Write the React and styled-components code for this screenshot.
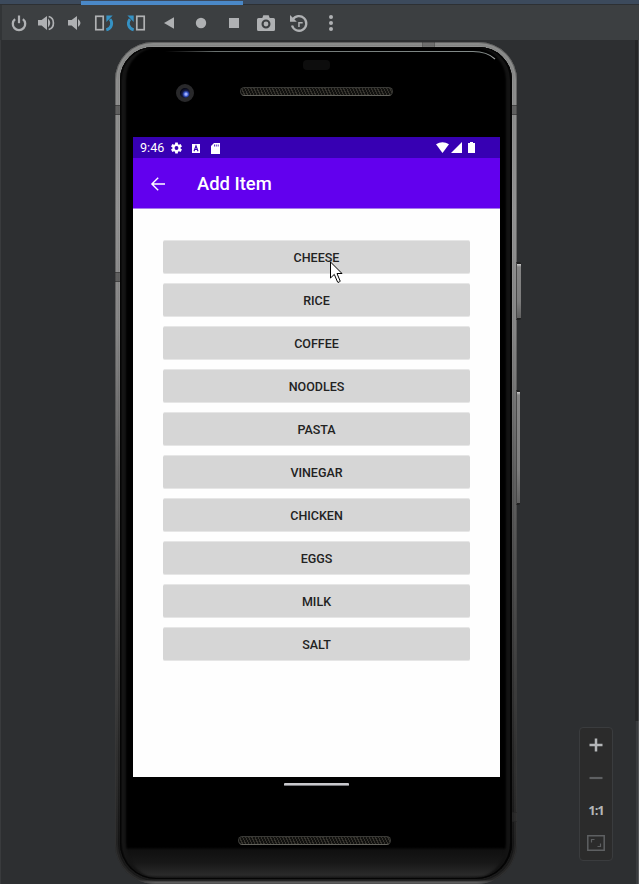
import React from "react";
import styled, { createGlobalStyle, css } from "styled-components";

const Global = createGlobalStyle`
  * { box-sizing: border-box; }
  body { margin: 0; background: #2d2f31; overflow: hidden; font-family: Roboto, sans-serif; }
  svg { display: block; }
`;

const Window = styled.div`
  position: relative;
  width: 639px;
  height: 884px;
  display: flex;
  flex-direction: column;
  background: #2d2f31;
  overflow: hidden;
`;

const TabStrip = styled.div`
  height: 5px;
  flex: none;
  padding-left: 81px;
  background: linear-gradient(#3c4a5c 4px, #2d3033 4px);
`;

const ActiveTab = styled.div`
  width: 162px;
  height: 5px;
  background: linear-gradient(#3c4a5c 1px, #4a88c7 1px);
`;

const Toolbar = styled.div`
  height: 35px;
  flex: none;
  display: flex;
  align-items: center;
  padding-left: 9px;
  background: #3c3f41;
  box-shadow: inset 2px 0 #323537;
`;

const ToolButton = styled.button`
  width: 20px;
  height: 20px;
  padding: 0;
  border: 0;
  background: none;
  margin-left: ${(p) => p.$gap}px;
  color: #afb1b3;
`;

const Stage = styled.main`
  flex: 1;
  padding: 2px 0 0 115px;
  box-shadow: inset 1px 0 #393b3d;
`;

const Phone = styled.section`
  position: relative;
  width: 402px;
  height: 842px;
  padding: 5px;
  border-radius: 38px 38px 40px 40px;
  background: linear-gradient(#8f908f 0, #989898 170px, #8a8a8a 290px, #606060 430px, #444 570px, #2a2a2a 700px, #171717 800px, #1c1c1c 838px, #666 841px);
  box-shadow: inset 0 0 0 1px rgba(60, 60, 60, 0.5), inset 0 0 0 3px rgba(255, 255, 255, 0.06), inset 0 0 0 4px rgba(0, 0, 0, 0.08);
`;

const Face = styled.div`
  height: 832px;
  display: flex;
  flex-direction: column;
  align-items: center;
  border-radius: 33px 33px 36px 36px;
  background: linear-gradient(#000 800px, #101010 803px, #181818 816px, #2a2a2a 828px, #111 832px);
  box-shadow: inset 0 0 0 1px #050505, inset 2px 0 #0d0d0d, inset 6px 0 2px #151515, inset -2px 0 #050505, inset -6px 0 2px #131313;
`;

const RimSeam = styled.i`
  position: absolute;
  background: rgba(50, 50, 50, 0.5);
  border: 0 solid rgba(30, 30, 30, 0.4);
  ${(p) =>
    p.$side === "top"
      ? css`top: 0; left: 307px; width: 13px; height: 5px; border-width: 0 1px; opacity: .6;`
      : css`top: ${p.$at}px; ${p.$side}: 0; width: 5px; height: 10px; border-width: 1px 0;`}
`;

const SideKey = styled.i`
  position: absolute;
  left: 401px;
  top: ${(p) => p.$at}px;
  width: ${(p) => p.$width}px;
  height: ${(p) => p.$length}px;
  border-radius: 0 2px 2px 0;
  border: solid #202020;
  border-width: 2px 0 2px 1px;
  border-left-color: #484848;
  background: linear-gradient(#ccc, #858585 3px, #7d7d7d 70%, #606060);
`;

const GlassEdge = styled.svg`
  position: absolute;
  left: 40px;
  top: 7px;
`;

const TopBezel = styled.div`
  width: 100%;
  height: 90px;
  flex: none;
  padding-top: 13px;
`;

const Sensor = styled.div`
  width: 27px;
  height: 10px;
  margin-left: 183px;
  border-radius: 4px;
  background: #0d0d0d;
`;

const CameraRow = styled.div`
  display: flex;
  align-items: center;
  height: 20px;
  margin-top: 11px;
  padding-left: 56px;
  gap: 46px;
`;

const Lens = styled.div`
  width: 18px;
  height: 18px;
  border-radius: 50%;
  margin-top: 3px;
  border: 4px solid #29292b;
  background: radial-gradient(circle at 60% 62%, #9dadff 0 1px, #3554c7 2.2px, #151b42 3.8px, #070814 6px);
`;

const Grille = styled.div`
  width: 153px;
  height: 9px;
  flex: none;
  margin-top: ${(p) => p.$top || 0}px;
  margin-left: ${(p) => p.$left || 0}px;
  border: 1px solid #3a3a37;
  border-bottom-color: #62625c;
  border-radius: 5px;
  background: repeating-linear-gradient(65deg, #36342e 0 1px, #11110f 1.2px 2.8px);
`;

const Screen = styled.div`
  width: 367px;
  height: 640px;
  flex: none;
  margin-left: 1px;
  background: #fefefe;
`;

const StatusBar = styled.div`
  height: 21px;
  display: flex;
  align-items: center;
  padding: 1px 25px 0 7px;
  background: #3700b3;
  color: #fff;
`;

const Clock = styled.span`
  width: 30px;
  font-size: 12.6px;
  line-height: 20px;
`;

const StatusIcon = styled.svg`
  margin-left: ${(p) => p.$gap || 0}px;
  flex: none;
`;

const StatusEnd = styled.div`
  display: flex;
  align-items: center;
  margin-left: auto;
  padding-bottom: 1px;
`;

const AppBar = styled.header`
  height: 51px;
  display: flex;
  align-items: center;
  padding: 1px 0 0 17px;
  gap: 31px;
  background: #6200ee;
  border-bottom: 1px solid #a67aec;
  color: #fff;
`;

const Title = styled.h1`
  margin: 0;
  font-size: 18.4px;
  font-weight: 500;
  line-height: 24px;
`;

const ItemList = styled.div`
  display: flex;
  flex-direction: column;
  gap: 9px;
  padding: 31px 30px 0;
`;

const ItemButton = styled.button`
  height: 34px;
  padding: 1px 0 0;
  border: 0 solid #e6e6e6;
  border-width: 1px 0;
  border-radius: 2px;
  background: #d6d6d6;
  color: #222;
  font: 500 12.5px/32px Roboto, sans-serif;
  text-transform: uppercase;
`;

const HomePill = styled.div`
  width: 65px;
  height: 3px;
  flex: none;
  margin-top: 6px;
  border: solid #77777b;
  border-width: 0 0 1px;
  border-radius: 1px;
  background: #c9c9cd;
`;

const Pointer = styled.svg`
  position: absolute;
  left: 329px;
  top: 260px;
`;

const ZoomPanel = styled.aside`
  position: absolute;
  left: 579px;
  top: 727px;
  width: 34px;
  height: 134px;
  display: flex;
  flex-direction: column;
  align-items: center;
  justify-content: space-between;
  padding: 7px 0 7px;
  border: 1px solid #3a3c3e;
  border-radius: 4px;
  background: #2b2b2b;
`;

const ZoomButton = styled.button`
  width: 20px;
  height: 20px;
  display: grid;
  place-items: center;
  padding: 0;
  border: 0;
  background: none;
  color: ${(p) => (p.$dim ? "#5e6062" : "#b4b6b8")};
  font: 700 13px/20px "Open Sans", Roboto, sans-serif;
  letter-spacing: -1px;
  white-space: nowrap;
`;

const ScrollEdge = styled.div`
  position: absolute;
  right: 0;
  top: 40px;
  width: 4px;
  height: 844px;
  background: linear-gradient(90deg, #252627 3px, #454749 3px);
  &::after {
    content: "";
    position: absolute;
    inset: 681px 0 0;
    background: linear-gradient(90deg, #2d2f31 1px, #393b3d 1px 3px, #545658 3px);
  }
`;

const SPEAKER = "M0 7h3.6L9 3v14l-5.4-4.5H0z";

const tools = [
  ["Power", 0, <><path d="M6.1 6.1a6.2 6.2 0 1 0 7.8 0" fill="none" stroke="currentColor" strokeWidth="2.3" /><path d="M10 2.5v7.7" stroke="currentColor" strokeWidth="2.2" /></>],
  ["Volume up", 8, <><path transform="translate(1)" d={SPEAKER} fill="currentColor" /><path d="M11 5.5q4.5 4.5 0 9z" fill="currentColor" /><path d="M11.7 3.5c6.3 1.6 6.3 11.4 0 13" fill="none" stroke="currentColor" strokeWidth="1.7" /></>],
  ["Volume down", 7, <><path transform="translate(4)" d={SPEAKER} fill="currentColor" /><path d="M14 6q5 4 0 8z" fill="currentColor" /></>],
  ["Rotate left", 10, <><rect x="1.8" y="3.3" width="7.4" height="13.4" fill="none" stroke="currentColor" strokeWidth="1.7" /><path d="M12.3 16.8c5.6-1.6 6.8-7 3.7-10.6" fill="none" stroke="#3592c4" strokeWidth="2.8" /><path d="M12.4 2.5h6.3l-6.3 6.4z" fill="#3592c4" /></>],
  ["Rotate right", 13, <><rect x="9.8" y="3.3" width="7.4" height="13.4" fill="none" stroke="currentColor" strokeWidth="1.7" /><path d="M6.7 16.8C1.1 15.2 0 9.8 3 6.2" fill="none" stroke="#3592c4" strokeWidth="2.8" /><path d="M.4 2.5h6.3v6.4z" fill="#3592c4" /></>],
  ["Back", 12, <path d="M15 4.3v11.4L5 10z" fill="currentColor" />],
  ["Home", 12, <circle cx="10" cy="10" r="5.2" fill="currentColor" />],
  ["Overview", 13, <path d="M5 5h10v10H5z" fill="currentColor" />],
  ["Take screenshot", 12, <path fillRule="evenodd" fill="currentColor" d="M2.5 5h3.8l1-2.7h5.4l1 2.7h3.8Q19 5 19 6.5v10Q19 18 17.5 18h-15Q1 18 1 16.5v-10Q1 5 2.5 5M10 6.5a4.5 4.5 0 1 0 0 9 4.5 4.5 0 0 0 0-9m0 2.1a2.4 2.4 0 1 1 0 4.8 2.4 2.4 0 0 1 0-4.8" />],
  ["Snapshots", 13, <><path d="M3.7 6.7a7.3 7.3 0 1 1-.7 5.8" fill="none" stroke="currentColor" strokeWidth="2.3" /><path d="M1 2v6.8h6.8zM9.2 9h4.5v1.5h-3V14H9.2z" fill="currentColor" /></>],
  ["More", 12, <><circle cx="10" cy="4" r="2" fill="currentColor" /><circle cx="10" cy="10" r="2" fill="currentColor" /><circle cx="10" cy="16" r="2" fill="currentColor" /></>],
];

const items = ["Cheese", "Rice", "Coffee", "Noodles", "Pasta", "Vinegar", "Chicken", "Eggs", "Milk", "Salt"];

export default function App() {
  return (
    <>
      <Global />
      <Window>
        <TabStrip><ActiveTab /></TabStrip>
        <Toolbar>
          {tools.map(([label, gap, art]) => (
            <ToolButton key={label} aria-label={label} $gap={gap}>
              <svg width="20" height="20" viewBox="0 0 20 20">{art}</svg>
            </ToolButton>
          ))}
        </Toolbar>
        <Stage>
          <Phone>
            <RimSeam $side="top" />
            <RimSeam $side="left" $at={63} />
            <RimSeam $side="left" $at={230} />
            <RimSeam $side="right" $at={63} />
            <RimSeam $side="right" $at={770} />
            <SideKey $at={220} $length={58} $width={5} />
            <SideKey $at={348} $length={115} $width={4} />
            <GlassEdge width="345" height="16" viewBox="0 0 345 16" fill="none">
              <defs>
                <linearGradient id="glass" gradientUnits="userSpaceOnUse" x1="10" y1="0" x2="345" y2="0">
                  <stop offset="0" stopColor="#555" stopOpacity="0" />
                  <stop offset=".15" stopColor="#6a716f" />
                  <stop offset=".95" stopColor="#848c8a" />
                  <stop offset="1" stopColor="#aaa" />
                </linearGradient>
              </defs>
              <path d="M10 2.500L318 2.500Q332 2.500 340 10" stroke="url(#glass)" strokeWidth="1.1" />
            </GlassEdge>
            <Face>
              <TopBezel>
                <Sensor />
                <CameraRow>
                  <Lens />
                  <Grille />
                </CameraRow>
              </TopBezel>
              <Screen>
                <StatusBar>
                  <Clock>9:46</Clock>
                  <StatusIcon width="13" height="12" viewBox="1 1 22 22">
                    <path fill="#fff" fillRule="evenodd" d="M19.4 13a8 8 0 0 0 0-2l2.6-1.8-2.5-4.4-3 1.2-1.7-1L14.3 2H9.7l-.5 3-1.7 1-3-1.2L2 9.2 4.6 11a8 8 0 0 0 0 2L2 14.8l2.5 4.4 3-1.2 1.7 1 .5 3h4.6l.5-3 1.7-1 3 1.2 2.5-4.4zM12 8.5a3.5 3.5 0 1 1 0 7 3.5 3.5 0 0 1 0-7" />
                  </StatusIcon>
                  <StatusIcon $gap={9} width="8" height="9" viewBox="0 0 8 9">
                    <path fill="#fff" d="M0 0h8v9H0z" />
                    <path d="M2 7.3 4 1.9l2 5.4M2.7 5.5h2.6" fill="none" stroke="#3700b3" strokeWidth="1.1" />
                  </StatusIcon>
                  <StatusIcon $gap={11} width="9" height="11" viewBox="0 0 9 11">
                    <path fill="#fff" d="M3 0h6v11H0V3z" />
                    <path d="M3.5 1.5v2M5.3 1.5v2M7.2 1.5v2" stroke="#3700b3" strokeWidth=".8" />
                  </StatusIcon>
                  <StatusEnd>
                    <StatusIcon width="13" height="11" viewBox="0 0 13 11"><path fill="#fff" d="M0 2.3Q6.5-1.8 13 2.3L6.5 11z" /></StatusIcon>
                    <StatusIcon $gap={2} width="11" height="11" viewBox="0 0 11 11"><path fill="#fff" d="M11 0v11H0z" /></StatusIcon>
                    <StatusIcon $gap={6} width="7" height="11" viewBox="0 0 7 11"><path fill="#fff" d="M2 0h3v1h2v10H0V1h2z" /></StatusIcon>
                  </StatusEnd>
                </StatusBar>
                <AppBar>
                  <svg width="16" height="16" viewBox="0 0 16 16" fill="none" stroke="#fff" strokeWidth="1.4"><path d="M15 8H2M8.2 1.7 1.9 8l6.3 6.3" /></svg>
                  <Title>Add Item</Title>
                </AppBar>
                <ItemList>
                  {items.map((name) => <ItemButton key={name}>{name}</ItemButton>)}
                </ItemList>
              </Screen>
              <HomePill />
              <Grille $top={50} $left={-4} />
            </Face>
          </Phone>
        </Stage>
        <Pointer width="15" height="25" viewBox="0 0 15 25">
          <path d="M1.5 2v16l3.8-3.6 3.3 7.7q1.6 1 2.6-1L8 13.5h5z" fill="#fff" stroke="#000" strokeWidth="1" />
        </Pointer>
        <ScrollEdge />
        <ZoomPanel>
          <ZoomButton aria-label="Zoom in"><svg width="14" height="14" viewBox="0 0 14 14"><path d="M7 .5v13M.5 7h13" stroke="currentColor" strokeWidth="2.5" /></svg></ZoomButton>
          <ZoomButton aria-label="Zoom out" $dim><svg width="14" height="14" viewBox="0 0 14 14"><path d="M.5 7h13" stroke="currentColor" strokeWidth="2.2" /></svg></ZoomButton>
          <ZoomButton>1:1</ZoomButton>
          <ZoomButton aria-label="Fit to window" $dim>
            <svg width="18" height="16" viewBox="0 0 18 16" fill="none" stroke="currentColor" strokeWidth="1.5"><path d="M.8.8h16.4v14.4H.8z" /><path d="M4.5 7.500v-3h3M13.500 8.500v3h-3" strokeWidth="1.2" /></svg>
          </ZoomButton>
        </ZoomPanel>
      </Window>
    </>
  );
}
